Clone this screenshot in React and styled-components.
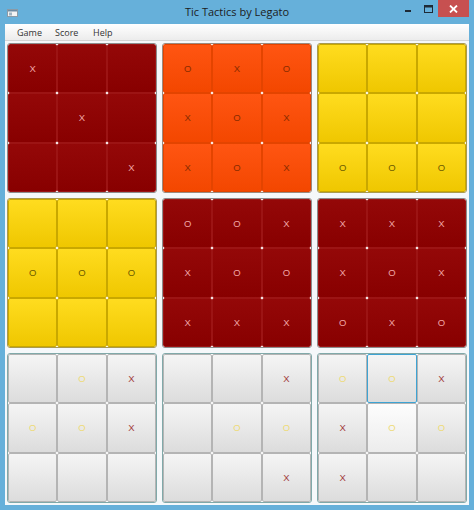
import React from "react";
import styled, { createGlobalStyle, css } from "styled-components";

const GlobalStyle = createGlobalStyle`
  html, body {
    margin: 0;
    padding: 0;
    background: #66b0da;
  }
  * {
    box-sizing: border-box;
  }
`;

const Window = styled.div`
  width: 474px;
  height: 510px;
  display: flex;
  flex-direction: column;
  background: #66b0da;
  font-family: "Open Sans", "Noto Sans", sans-serif;
  overflow: hidden;
`;

const TitleBar = styled.div`
  height: 24px;
  display: flex;
  align-items: flex-start;
  position: relative;
  flex-shrink: 0;
`;

const AppIcon = styled.svg`
  margin: 9px 0 0 7px;
`;

const Title = styled.div`
  position: absolute;
  left: 0;
  right: 0;
  top: 4px;
  text-align: center;
  font-size: 11px;
  color: #1c1c1c;
  pointer-events: none;
`;

const Controls = styled.div`
  margin-left: auto;
  margin-right: 5px;
  display: flex;
  align-items: flex-start;
`;

const CtrlButton = styled.div`
  width: ${(p) => p.$w}px;
  height: 17px;
  display: flex;
  align-items: center;
  justify-content: center;
  background: ${(p) => (p.$close ? "#c75050" : "transparent")};
`;

const Frame = styled.div`
  flex: 1;
  margin: 0 5px 5px 5px;
  display: flex;
  flex-direction: column;
  background: #f5f8fa;
`;

const MenuBar = styled.div`
  height: 17px;
  display: flex;
  align-items: center;
  padding-left: 12px;
  background: linear-gradient(#ffffff, #ececec);
  border-bottom: 1px solid #d4d4d4;
`;

const MenuItem = styled.div`
  width: 38px;
  font-size: 9px;
  color: #333;
`;

const Boards = styled.div`
  display: grid;
  grid-template-columns: repeat(3, 150px);
  grid-auto-rows: 150px;
  gap: 5px;
  padding: 2px;
`;

const themes = {
  red: {
    bg: "linear-gradient(#940808, #880000)",
    line: "#9c1414",
    text: "#f0a4a4",
    o: "#f0a4a4",
    frame: "#8c8c8c",
  },
  orange: {
    bg: "linear-gradient(#ff5512, #f34700)",
    line: "#e44400",
    text: "#8a2c00",
    o: "#8a2c00",
    frame: "#9a8a80",
  },
  yellow: {
    bg: "linear-gradient(#ffdc1f, #efc700)",
    line: "#c9a800",
    text: "#6e5c00",
    o: "#6e5c00",
    frame: "#a89a50",
  },
  light: {
    bg: "linear-gradient(#f5f5f5, #dcdcdc)",
    line: "#b4b4b4",
    text: "#a23c3c",
    o: "#eedb78",
    frame: "#80a9a9",
  },
};

const Board = styled.div`
  display: grid;
  grid-template-columns: repeat(3, 1fr);
  grid-template-rows: repeat(3, 1fr);
  background: #ffffff;
  border: 1px solid ${(p) => themes[p.$tone].frame};
  border-radius: 3px;
  overflow: hidden;
`;

const Cell = styled.div`
  display: flex;
  align-items: center;
  justify-content: center;
  background: ${(p) => themes[p.$tone].bg};
  border: 1px solid ${(p) => themes[p.$tone].line};
  border-radius: 2px;
  font-family: "Liberation Sans", Arial, sans-serif;
  font-size: 9.5px;
  color: ${(p) => (p.$mark === "O" ? themes[p.$tone].o : themes[p.$tone].text)};
  ${(p) =>
    p.$hover &&
    css`
      background: linear-gradient(#fdfdfd, #ececec);
    `}
  ${(p) =>
    p.$selected &&
    css`
      border: 1px solid #3ea3d3;
    `}
`;

const boards = [
  { tone: "red", cells: "X___X___X".split("") },
  { tone: "orange", cells: "OXOXOXXOX".split("") },
  { tone: "yellow", cells: "______OOO".split("") },
  { tone: "yellow", cells: "___OOO___".split("") },
  { tone: "red", cells: "OOXXOOXXX".split("") },
  { tone: "red", cells: "XXXXOXOXO".split("") },
  { tone: "light", cells: "_OXOOX___".split("") },
  { tone: "light", cells: "__X_OO__X".split("") },
  { tone: "light", cells: "OOXXOOX__".split(""), selected: 1, hover: 4 },
];

const WindowIcon = () => (
  <AppIcon width="11" height="8" viewBox="0 0 11 8">
    <rect x="0.5" y="0.5" width="10" height="7" fill="#f4f4f4" stroke="#8a9aa6" />
    <rect x="1" y="1" width="9" height="1.5" fill="#6e8ca4" />
    <rect x="2" y="3.5" width="3" height="3" fill="#9fb3c2" />
  </AppIcon>
);

const App = () => (
  <>
    <GlobalStyle />
    <Window>
      <TitleBar>
        <WindowIcon />
        <Title>Tic Tactics by Legato</Title>
        <Controls>
          <CtrlButton $w={19}>
            <svg width="7" height="7" viewBox="0 0 7 7">
              <rect x="0" y="5" width="6" height="2" fill="#1e2a36" />
            </svg>
          </CtrlButton>
          <CtrlButton $w={20}>
            <svg width="9" height="8" viewBox="0 0 9 8">
              <rect x="0.5" y="0.5" width="8" height="7" fill="none" stroke="#1e2a36" />
              <rect x="0.5" y="0.5" width="8" height="2" fill="#1e2a36" />
            </svg>
          </CtrlButton>
          <CtrlButton $w={31} $close>
            <svg width="9" height="8" viewBox="0 0 9 8">
              <path d="M1 0.5 L8 7.5 M8 0.5 L1 7.5" stroke="#ffffff" strokeWidth="1.8" />
            </svg>
          </CtrlButton>
        </Controls>
      </TitleBar>
      <Frame>
        <MenuBar>
          <MenuItem>Game</MenuItem>
          <MenuItem>Score</MenuItem>
          <MenuItem>Help</MenuItem>
        </MenuBar>
        <Boards>
          {boards.map((b, bi) => (
            <Board key={bi} $tone={b.tone}>
              {b.cells.map((c, ci) => (
                <Cell
                  key={ci}
                  $tone={b.tone}
                  $mark={c}
                  $selected={b.selected === ci}
                  $hover={b.hover === ci}
                >
                  {c === "_" ? "" : c}
                </Cell>
              ))}
            </Board>
          ))}
        </Boards>
      </Frame>
    </Window>
  </>
);

export default App;
